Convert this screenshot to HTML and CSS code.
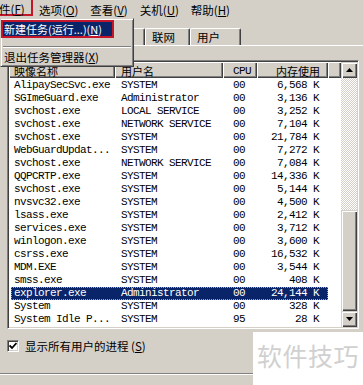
FILE: index.html
```html
<!DOCTYPE html>
<html lang="zh-CN">
<head>
  <meta charset="UTF-8">
  <meta name="viewport" content="width=device-width, initial-scale=1.0">
  <title>Windows 任务管理器</title>
  <link rel="stylesheet" href="styles.css">
</head>
<body>
  <div class="window">
    <div class="menubar">
      <span class="menu-item active">件(<u>F</u>)</span>
      <span class="menu-item">选项(<u>O</u>)</span>
      <span class="menu-item">查看(<u>V</u>)</span>
      <span class="menu-item">关机(<u>U</u>)</span>
      <span class="menu-item">帮助(<u>H</u>)</span>
    </div>

    <!-- the first tabs sit under the open menu, only their edges would show -->
    <div class="tabs">
      <div class="tab" style="width: 60px;"></div>
      <div class="tab" style="width: 38px;"></div>
      <div class="tab" style="width: 45px;"></div>
      <div class="tab" style="width: 45px;">联网</div>
      <div class="tab" style="width: 51px;">用户</div>
    </div>

    <div class="page">
      <div class="listview">
        <div class="lv-main">
          <div class="lv-header">
            <div class="hd c-name">映像名称</div>
            <div class="hd c-user">用户名</div>
            <div class="hd c-cpu mono">CPU</div>
            <div class="hd c-mem">内存使用</div>
            <div class="hd c-fill"></div>
          </div>
          <div class="lv-body">
            <div class="row"><span class="c-name">AlipaySecSvc.exe</span><span class="c-user">SYSTEM</span><span class="c-cpu">00</span><span class="c-mem">6,568 K</span></div>
            <div class="row"><span class="c-name">SGImeGuard.exe</span><span class="c-user">Administrator</span><span class="c-cpu">00</span><span class="c-mem">3,136 K</span></div>
            <div class="row"><span class="c-name">svchost.exe</span><span class="c-user">LOCAL SERVICE</span><span class="c-cpu">00</span><span class="c-mem">3,252 K</span></div>
            <div class="row"><span class="c-name">svchost.exe</span><span class="c-user">NETWORK SERVICE</span><span class="c-cpu">00</span><span class="c-mem">7,104 K</span></div>
            <div class="row"><span class="c-name">svchost.exe</span><span class="c-user">SYSTEM</span><span class="c-cpu">00</span><span class="c-mem">21,784 K</span></div>
            <div class="row"><span class="c-name">WebGuardUpdat...</span><span class="c-user">SYSTEM</span><span class="c-cpu">00</span><span class="c-mem">7,272 K</span></div>
            <div class="row"><span class="c-name">svchost.exe</span><span class="c-user">NETWORK SERVICE</span><span class="c-cpu">00</span><span class="c-mem">7,084 K</span></div>
            <div class="row"><span class="c-name">QQPCRTP.exe</span><span class="c-user">SYSTEM</span><span class="c-cpu">00</span><span class="c-mem">14,336 K</span></div>
            <div class="row"><span class="c-name">svchost.exe</span><span class="c-user">SYSTEM</span><span class="c-cpu">00</span><span class="c-mem">5,144 K</span></div>
            <div class="row"><span class="c-name">nvsvc32.exe</span><span class="c-user">SYSTEM</span><span class="c-cpu">00</span><span class="c-mem">4,500 K</span></div>
            <div class="row"><span class="c-name">lsass.exe</span><span class="c-user">SYSTEM</span><span class="c-cpu">00</span><span class="c-mem">2,412 K</span></div>
            <div class="row"><span class="c-name">services.exe</span><span class="c-user">SYSTEM</span><span class="c-cpu">00</span><span class="c-mem">3,712 K</span></div>
            <div class="row"><span class="c-name">winlogon.exe</span><span class="c-user">SYSTEM</span><span class="c-cpu">00</span><span class="c-mem">3,600 K</span></div>
            <div class="row"><span class="c-name">csrss.exe</span><span class="c-user">SYSTEM</span><span class="c-cpu">00</span><span class="c-mem">16,532 K</span></div>
            <div class="row"><span class="c-name">MDM.EXE</span><span class="c-user">SYSTEM</span><span class="c-cpu">00</span><span class="c-mem">3,544 K</span></div>
            <div class="row"><span class="c-name">smss.exe</span><span class="c-user">SYSTEM</span><span class="c-cpu">00</span><span class="c-mem">408 K</span></div>
            <div class="row selected"><span class="c-name">explorer.exe</span><span class="c-user">Administrator</span><span class="c-cpu">00</span><span class="c-mem">24,144 K</span></div>
            <div class="row"><span class="c-name">System</span><span class="c-user">SYSTEM</span><span class="c-cpu">00</span><span class="c-mem">328 K</span></div>
            <div class="row"><span class="c-name">System Idle P...</span><span class="c-user">SYSTEM</span><span class="c-cpu">95</span><span class="c-mem">28 K</span></div>
          </div>
        </div>
        <div class="scrollbar">
          <div class="sb-btn">
            <svg width="7" height="4" viewBox="0 0 7 4"><path d="M3.5 0 L7 4 L0 4 Z" fill="#000"/></svg>
          </div>
          <div class="sb-track"></div>
          <div class="sb-thumb"></div>
          <div class="sb-btn">
            <svg width="7" height="4" viewBox="0 0 7 4"><path d="M0 0 L7 0 L3.5 4 Z" fill="#000"/></svg>
          </div>
        </div>
      </div>

      <div class="check-row">
        <span class="checkbox">
          <svg width="8" height="8" viewBox="0 0 8 8"><path d="M0.5 3.5 L3 6 L7.5 1" fill="none" stroke="#000" stroke-width="1.8"/></svg>
        </span>
        <span class="check-text">显示所有用户的进程 (<u>S</u>)</span>
      </div>
    </div>

    <div class="statusbar"></div>

    <div class="dropdown">
      <div class="dd-item hot">新建任务(运行...)(<u>N</u>)</div>
      <div class="dd-sep"></div>
      <div class="dd-item">退出任务管理器(<u>X</u>)</div>
    </div>

    <div class="watermark">软件技巧</div>
  </div>
</body>
</html>
```

FILE: styles.css
```css
* {
  box-sizing: border-box;
  margin: 0;
  padding: 0;
}

body {
  width: 363px;
  height: 385px;
  overflow: hidden;
  background-color: #d4d0c8;
  font-family: "Noto Sans CJK SC", sans-serif;
  font-size: 11.5px;
  color: #000;
}

u {
  text-decoration: underline;
  text-underline-offset: 1px;
}

.mono {
  font-family: "Liberation Mono", "Noto Sans CJK SC", monospace;
  font-size: 11px;
  letter-spacing: -0.6px;
}

.window {
  position: relative;
  height: 385px;
  display: flex;
  flex-direction: column;

  & > .menubar {
    height: 18px;
    display: flex;
    align-items: flex-start;

    .menu-item {
      height: 18px;
      line-height: 21px;
      padding: 0 6px 0 6px;
      white-space: nowrap;
    }

    .menu-item.active {
      width: 34px;
      height: 16px;
      margin-left: -1px;
      padding: 0;
      line-height: 19px;
      border-right: 2px solid #c4162a;
      border-bottom: 2px solid #c4162a;
    }
  }

  & > .tabs {
    height: 28px;
    display: flex;
    align-items: flex-end;
    padding-left: 2px;
    border-bottom: 1px solid #fff;

    .tab {
      height: 17px;
      line-height: 17px;
      padding-left: 6px;
      border-top: 1px solid #fff;
      border-left: 1px solid #fff;
      border-right: 1px solid #404040;
      border-radius: 2px 2px 0 0;
      box-shadow: inset -1px 0 #808080;
      white-space: nowrap;
      overflow: hidden;
    }
  }

  & > .page {
    display: flex;
    flex-direction: column;
  }
}

.listview {
  margin: 14px 0 0 7px;
  width: 352px;
  height: 269px;
  display: flex;
  background-color: #fff;
  border: 1px solid;
  border-color: #808080 #fff #fff #808080;
  box-shadow: inset 1px 1px #404040, inset -1px -1px #d4d0c8;
  padding: 1px;

  & > .lv-main {
    width: 332px;
    display: flex;
    flex-direction: column;
    overflow: hidden;
  }

  .c-name { width: 106px; padding-left: 5px; }
  .c-user { width: 108px; padding-left: 6px; }
  .c-cpu { width: 34px; padding-left: 10px; }
  .c-mem { width: 71px; padding-right: 9px; text-align: right; }
  .c-fill { flex: 1; }

  .lv-header {
    height: 16px;
    display: flex;

    .hd {
      height: 16px;
      padding-top: 3px;
      line-height: 12px;
      background-color: #d4d0c8;
      box-shadow: inset 1px 1px #fff, inset -1px -1px #404040, inset -2px -2px #808080;
      white-space: nowrap;
      overflow: hidden;
    }

    .hd.c-name,
    .hd.c-user,
    .hd.c-mem {
      font-size: 11px;
    }

    .hd.c-mem {
      padding-right: 8px;
    }
  }

  .lv-body {
    padding-top: 1px;
    display: flex;
    flex-direction: column;
    font-family: "Liberation Mono", monospace;
    font-size: 11px;
    letter-spacing: -0.6px;

    .row {
      height: 13px;
      line-height: 13px;
      display: flex;
      width: 319px;

      span {
        white-space: nowrap;
        overflow: hidden;
        flex-shrink: 0;
      }
    }

    .row.selected {
      margin-left: 2px;
      width: 317px;
      background-color: #0a246a;
      color: #fff;
      outline: 1px dotted #b8a878;
      outline-offset: -1px;

      .c-name {
        width: 104px;
        padding-left: 3px;
      }
    }
  }

  & > .scrollbar {
    width: 16px;
    display: flex;
    flex-direction: column;

    .sb-btn,
    .sb-thumb {
      background-color: #d4d0c8;
      box-shadow: inset 1px 1px #d4d0c8, inset 2px 2px #fff, inset -1px -1px #404040, inset -2px -2px #808080;
    }

    .sb-btn {
      height: 16px;
      display: flex;
      align-items: center;
      justify-content: center;

      svg {
        display: block;
      }
    }

    .sb-track {
      height: 132px;
      background: repeating-conic-gradient(#fff 0 25%, #d4d0c8 0 50%) 0 0 / 2px 2px;
    }

    .sb-thumb {
      flex: 1;
    }
  }
}

.check-row {
  margin: 10px 0 0 7px;
  display: flex;
  align-items: center;
  gap: 6px;

  .checkbox {
    width: 12px;
    height: 12px;
    display: flex;
    align-items: center;
    justify-content: center;
    background-color: #fff;
    border: 1px solid;
    border-color: #808080 #fff #fff #808080;
    box-shadow: inset 1px 1px #404040, inset -1px -1px #d4d0c8;
  }

  .check-text {
    line-height: 14px;
    white-space: nowrap;
  }
}

.statusbar {
  margin-top: auto;
  height: 12px;
  border-top: 1px solid #808080;
  box-shadow: inset 0 1px #fff;
}

.dropdown {
  position: absolute;
  top: 18px;
  left: 0;
  width: 134px;
  height: 49px;
  padding: 1px 2px 0;
  background-color: #d4d0c8;
  border: 1px solid;
  border-color: #d4d0c8 #404040 #404040 #d4d0c8;
  box-shadow: inset 1px 1px #fff, inset -1px -1px #808080;

  .dd-item {
    height: 17px;
    padding-top: 2px;
    line-height: 13px;
    padding-left: 1px;
    white-space: nowrap;
  }

  .dd-item.hot {
    height: 18px;
    width: 113px;
    margin-left: -2px;
    padding-top: 0;
    padding-left: 1px;
    line-height: 14px;
    font-size: 11px;
    background-color: #0a246a;
    color: #fff;
    border: 2px solid #c4162a;
  }

  .dd-sep {
    margin: 8px 0 1px;
    height: 2px;
    border-top: 1px solid #808080;
    border-bottom: 1px solid #fff;
  }
}

.watermark {
  position: absolute;
  left: 253px;
  top: 332px;
  right: 0;
  bottom: 0;
  background-color: #fff;
  padding: 10px 0 0 4px;
  font-size: 25px;
  line-height: 26px;
  letter-spacing: 0.5px;
  color: #d0d0d0;
  white-space: nowrap;
}
```
